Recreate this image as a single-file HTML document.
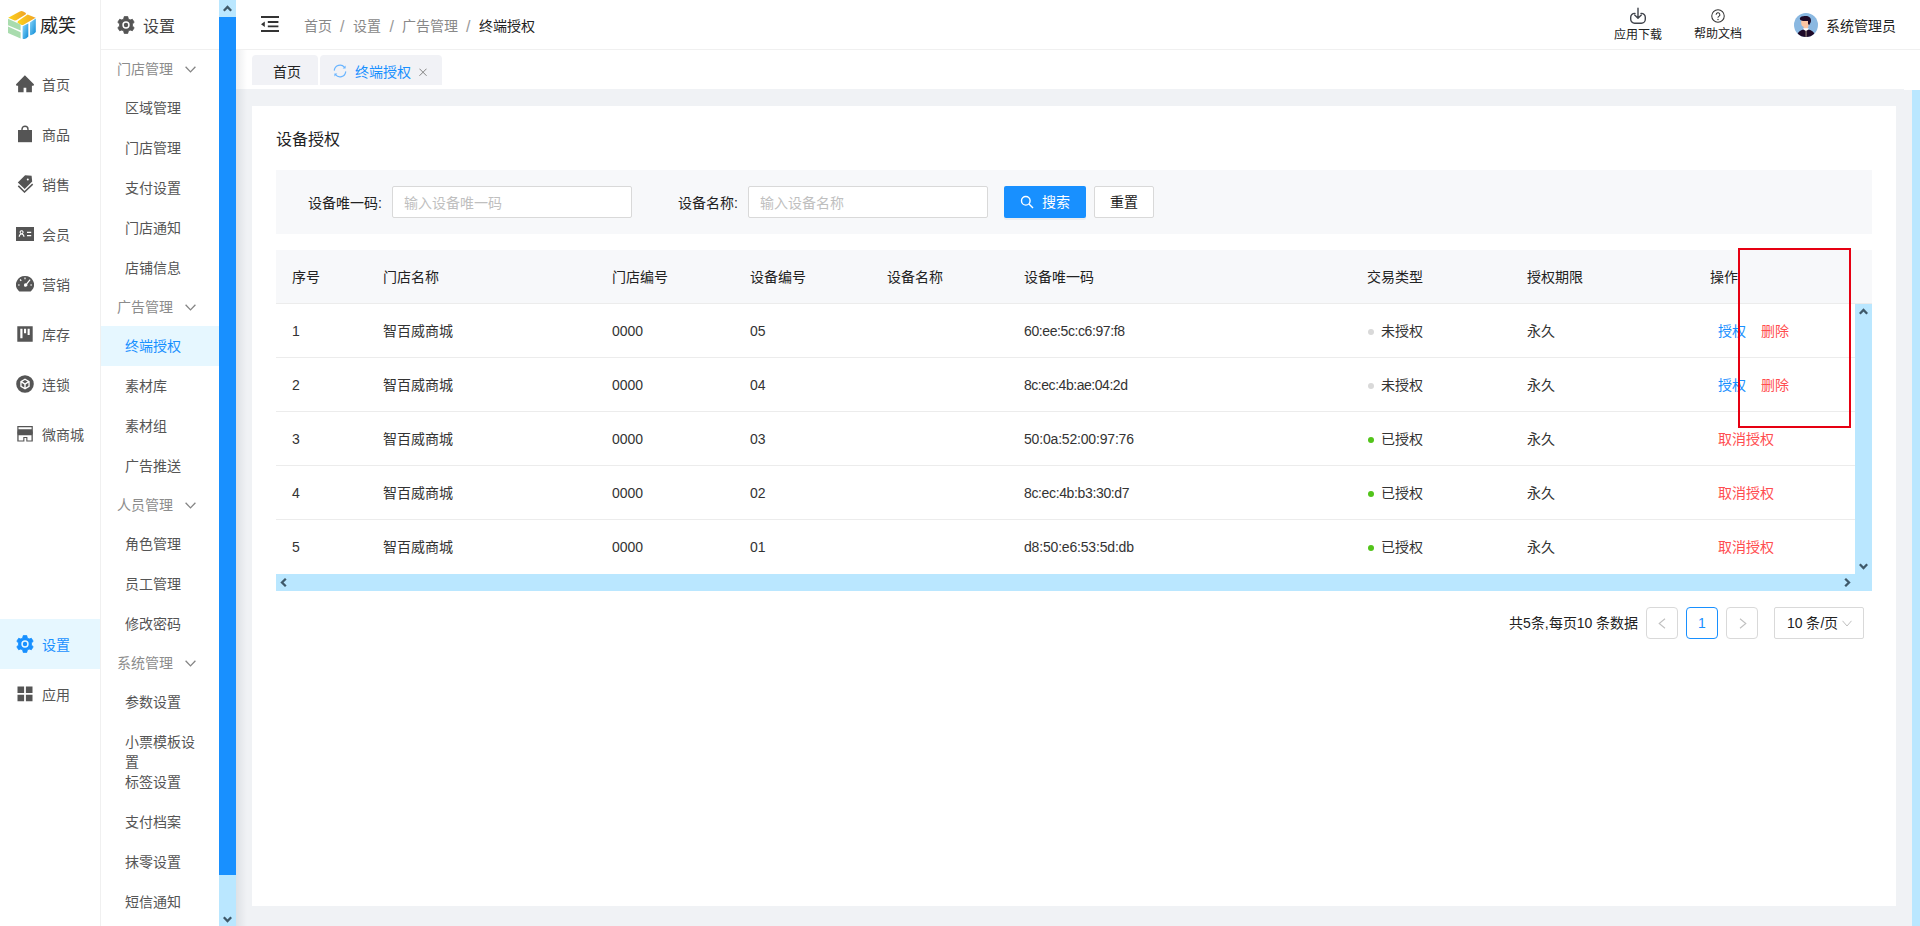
<!DOCTYPE html>
<html lang="zh-CN">
<head>
<meta charset="utf-8">
<title>终端授权</title>
<style>
*{box-sizing:border-box;margin:0;padding:0}
html,body{width:1920px;height:926px;overflow:hidden;background:#f0f2f5}
body{font-family:"Liberation Sans",sans-serif;font-size:14px;color:#333;position:relative}
.abs{position:absolute}
svg{display:block}
.t{position:absolute;white-space:nowrap;font-size:14px;line-height:20px}
#nav1{position:absolute;left:0;top:0;width:100px;height:926px;background:#fff}
#nav1 .logo{position:absolute;left:8px;top:11px;width:28px;height:28px}
.n1{position:absolute;left:0;width:100px;height:50px}
.n1 .ic{position:absolute;left:16px;top:16px;width:18px;height:18px}
.n1.on{background:#e6f7ff}
#nav2{position:absolute;left:100px;top:0;width:119px;height:926px;background:#fff;border-left:1px solid #f0f0f0}
#nav2 .hd{position:absolute;left:0;top:0;width:118px;height:50px;border-bottom:1px solid #f0f0f0}
.son{position:absolute;left:0;width:118px;height:40px;background:#e6f7ff}
#sb{position:absolute;left:219px;top:0;width:17px;height:926px;background:#bae7ff}
#sb .thumb{position:absolute;left:0;top:17px;width:17px;height:858px;background:#1890ff}
#top{position:absolute;left:236px;top:0;width:1684px;height:50px;background:#fff;border-bottom:1px solid #f0f0f0}
#tabs{position:absolute;left:236px;top:50px;width:1684px;height:39px;background:#fff}
.tab{position:absolute;top:5px;height:30px;background:#f1f2f6;border-radius:4px 4px 0 0}
#card{position:absolute;left:252px;top:106px;width:1644px;height:800px;background:#fff}
#psb{position:absolute;left:1912px;top:90px;width:8px;height:836px;background:#bae7ff}
.inp{position:absolute;top:186px;width:240px;height:32px;background:#fff;border:1px solid #d9d9d9;border-radius:2px}
.hl{position:absolute;left:276px;width:1579px;height:1px;background:#ececec}
.dot{position:absolute;width:6px;height:6px;border-radius:50%}
.pg{position:absolute;top:607px;width:32px;height:32px;border:1px solid #d9d9d9;border-radius:4px;background:#fff}
</style>
</head>
<body>
<div id="nav1">
<svg class="logo" viewBox="0 0 28 28"><defs>
<linearGradient id="ly" x1="0" y1="0" x2="1" y2="0"><stop offset="0" stop-color="#fdd41a"/><stop offset="1" stop-color="#f0a326"/></linearGradient>
<linearGradient id="lb" x1="0" y1="0" x2="1" y2="1"><stop offset="0" stop-color="#8fd8fa"/><stop offset="1" stop-color="#0a8ad6"/></linearGradient></defs>
<path fill="url(#ly)" d="M0.200 6.700 11.800.5q1.700-.8 3.400 0L17.900 1.900v1.300L8.300 9.200l-1.600.3z"/>
<path fill="url(#ly)" d="M9.800 10.300 19.600 3.600l8 3.100L15.500 13.700q-1.200.5-2.400 0L9.600 11.900z"/>
<path fill="#a9dcae" d="M0 7.800 12.600 13.600v6L0 14.200z"/>
<path fill="#a9dcae" d="M0 15.600 12.600 21.300v6.300L0 22z"/>
<path fill="url(#lb)" d="M14.600 15.200 20.300 12.400V25.500q-2.300 2.600-4.800 2.600-.9-.2-.9-1.200z"/>
<path fill="url(#lb)" d="M22 11.400 27.800 7.600V21q-2 2.800-5 3.200-.8-.1-.8-.9z"/>
</svg>
<div class="n1" style="top:59px"><svg class="ic" viewBox="0 0 18 18"><path fill="#555" d="M8.900 0.200 0.100 9.200Q-.2 10.700 1 10.800H2.100V17.200H7.600V12.700H10.300V17.200H15.900V10.800H17Q18.200 10.700 17.900 9.200z"/></svg></div>
<div class="n1" style="top:109px"><svg class="ic" viewBox="0 0 18 18"><path fill="#555" d="M2 5h14v12.200H2z"/><path fill="none" stroke="#555" stroke-width="1.400" d="M6 6V4.200a3 3 0 0 1 6 0V6"/></svg></div>
<div class="n1" style="top:159px"><svg class="ic" viewBox="0 0 18 18"><path fill="#555" fill-rule="evenodd" d="M9.100 0.200 15.600 0.800 16.200 6.500 8.700 14 1.800 7.400zM11.800 3.400a1 1 0 1 0 .01 2 1 1 0 0 0-.01-2z"/><path fill="none" stroke="#555" stroke-width="1.500" d="M2.300 10.900 8.500 17 16.700 9.100"/></svg></div>
<div class="n1" style="top:209px"><svg class="ic" viewBox="0 0 18 18"><path fill="#555" fill-rule="evenodd" d="M0 2h18v14H0zM5.600 5.200a2 2 0 0 0-1.200 3.600C3.300 9.400 2.700 10.500 2.700 11.800h1.200c0-1.200.7-2.200 1.700-2.200s1.700 1 1.700 2.200h1.200c0-1.300-.6-2.400-1.700-3a2 2 0 0 0-1.200-3.600zm0 1.100a.95.950 0 1 1 0 1.900.95.950 0 0 1 0-1.900zM11 6.800v1.300h4.200V6.800zM11 10v1.300h4.200V10z"/></svg></div>
<div class="n1" style="top:259px"><svg class="ic" viewBox="0 0 18 18"><path fill="#555" fill-rule="evenodd" d="M9 1.100a8.900 8.500 0 0 0-7 13.900c.5.900 1.100 1.500 2 1.500h10c.9 0 1.500-.6 2-1.500A8.900 8.500 0 0 0 9 1.100zM8.400 2.600h1.200v1.700H8.400zM3.600 5l.9-.9 1.200 1.200-.9.900zM13.700 4.200l.9.900-3.400 4.200a1.700 1.700 0 1 1-1-.9zM2 9.400h1.700v1.200H2zM14.300 9.400H16v1.200h-1.700z"/></svg></div>
<div class="n1" style="top:309px"><svg class="ic" viewBox="0 0 18 18"><path fill="#555" fill-rule="evenodd" d="M1.300 1.200h15.400v15.600H1.300zM4.300 3.800v9.400h2.200V3.800zM8 3.800v4.400h2.100V3.800zM11.600 3.800v6.200h2.100V3.800z"/></svg></div>
<div class="n1" style="top:359px"><svg class="ic" viewBox="0 0 18 18"><path fill="#555" fill-rule="evenodd" d="M9 0.200a8.800 8.800 0 1 0 0 17.600A8.800 8.800 0 0 0 9 .200zM9 3.600l4.700 2.700v5.400L9 14.400l-4.700-2.700V6.300zM9 5.100 6.300 6.600 9 8.200l2.700-1.600zM5.600 7.800v3.200l2.700 1.600V9.400zM12.400 7.800 9.700 9.400v3.200l2.700-1.600z"/></svg></div>
<div class="n1" style="top:409px"><svg class="ic" viewBox="0 0 18 18"><path fill="#555" fill-rule="evenodd" d="M1.300 1H16.800V4.400Q17.100 7.500 16.800 10.200V16.600H1.300V10.200Q1 7.500 1.300 4.400zM2.500 2.200V4.200H15.600V2.200zM2.600 10.200V15.400H7.300V12H11.400V15.400H15.500V10.200zM8.400 13.100V16.600H10.300V13.100z"/></svg></div>
<div class="n1 on" style="top:619px"><svg class="ic" viewBox="0 0 18 18"><path fill="#1890ff" stroke="#1890ff" stroke-width=".8" stroke-linejoin="round" fill-rule="evenodd" d="M11.33 2.93 L10.79 0.59 L7.21 0.59 L6.67 2.93 L4.91 3.95 L2.61 3.25 L0.82 6.34 L2.58 7.98 L2.58 10.02 L0.82 11.66 L2.61 14.75 L4.91 14.05 L6.67 15.07 L7.21 17.41 L10.79 17.41 L11.33 15.07 L13.09 14.05 L15.39 14.75 L17.18 11.66 L15.42 10.02 L15.42 7.98 L17.18 6.34 L15.39 3.25 L13.09 3.95Z"/><circle cx="9" cy="9" r="2.950" fill="none" stroke="#e6f7ff" stroke-width="1.500"/></svg></div>
<div class="n1" style="top:669px"><svg class="ic" viewBox="0 0 18 18"><path fill="#555" d="M1.500 1.500h6.600v6.500H1.500zM9.900 1.500h6.600v6.500H9.900zM1.500 9.800h6.600v6.500H1.500zM9.900 9.800h6.600v6.500H9.900z"/></svg></div>
</div>
<div class="t" style="left:40px;top:14px;font-size:18px;line-height:24px;color:#222;">威笑</div>
<div class="t" style="left:42px;top:75px;font-size:14px;line-height:20px;color:#555;">首页</div>
<div class="t" style="left:42px;top:125px;font-size:14px;line-height:20px;color:#555;">商品</div>
<div class="t" style="left:42px;top:175px;font-size:14px;line-height:20px;color:#555;">销售</div>
<div class="t" style="left:42px;top:225px;font-size:14px;line-height:20px;color:#555;">会员</div>
<div class="t" style="left:42px;top:275px;font-size:14px;line-height:20px;color:#555;">营销</div>
<div class="t" style="left:42px;top:325px;font-size:14px;line-height:20px;color:#555;">库存</div>
<div class="t" style="left:42px;top:375px;font-size:14px;line-height:20px;color:#555;">连锁</div>
<div class="t" style="left:42px;top:425px;font-size:14px;line-height:20px;color:#555;">微商城</div>
<div class="t" style="left:42px;top:635px;font-size:14px;line-height:20px;color:#1890ff;">设置</div>
<div class="t" style="left:42px;top:685px;font-size:14px;line-height:20px;color:#555;">应用</div>
<div id="nav2"><div class="hd"></div>
<svg class="abs" style="left:16px;top:16px" width="18" height="18" viewBox="0 0 18 18"><path fill="#555" stroke="#555" stroke-width=".8" stroke-linejoin="round" fill-rule="evenodd" d="M11.33 2.93 L10.79 0.59 L7.21 0.59 L6.67 2.93 L4.91 3.95 L2.61 3.25 L0.82 6.34 L2.58 7.98 L2.58 10.02 L0.82 11.66 L2.61 14.75 L4.91 14.05 L6.67 15.07 L7.21 17.41 L10.79 17.41 L11.33 15.07 L13.09 14.05 L15.39 14.75 L17.18 11.66 L15.42 10.02 L15.42 7.98 L17.18 6.34 L15.39 3.25 L13.09 3.95Z"/><circle cx="9" cy="9" r="2.950" fill="none" stroke="#fff" stroke-width="1.500"/></svg>
<div class="son" style="top:326px"></div>
</div>
<div class="t" style="left:143px;top:15.5px;font-size:16px;line-height:22px;color:#444;">设置</div>
<div class="t" style="left:117px;top:59px;font-size:14px;line-height:20px;color:#8c8c8c;">门店管理</div>
<svg class="abs" style="left:185px;top:66px" width="11" height="7" viewBox="0 0 11 7"><path fill="none" stroke="#858585" stroke-width="1.300" d="M.6.800 5.500 5.900 10.400.8"/></svg>
<div class="t" style="left:117px;top:297px;font-size:14px;line-height:20px;color:#8c8c8c;">广告管理</div>
<svg class="abs" style="left:185px;top:304px" width="11" height="7" viewBox="0 0 11 7"><path fill="none" stroke="#858585" stroke-width="1.300" d="M.6.800 5.500 5.900 10.400.8"/></svg>
<div class="t" style="left:117px;top:495px;font-size:14px;line-height:20px;color:#8c8c8c;">人员管理</div>
<svg class="abs" style="left:185px;top:502px" width="11" height="7" viewBox="0 0 11 7"><path fill="none" stroke="#858585" stroke-width="1.300" d="M.6.800 5.500 5.900 10.400.8"/></svg>
<div class="t" style="left:117px;top:653px;font-size:14px;line-height:20px;color:#8c8c8c;">系统管理</div>
<svg class="abs" style="left:185px;top:660px" width="11" height="7" viewBox="0 0 11 7"><path fill="none" stroke="#858585" stroke-width="1.300" d="M.6.800 5.500 5.900 10.400.8"/></svg>
<div class="t" style="left:125px;top:98px;font-size:14px;line-height:20px;color:#555;">区域管理</div>
<div class="t" style="left:125px;top:138px;font-size:14px;line-height:20px;color:#555;">门店管理</div>
<div class="t" style="left:125px;top:178px;font-size:14px;line-height:20px;color:#555;">支付设置</div>
<div class="t" style="left:125px;top:218px;font-size:14px;line-height:20px;color:#555;">门店通知</div>
<div class="t" style="left:125px;top:258px;font-size:14px;line-height:20px;color:#555;">店铺信息</div>
<div class="t" style="left:125px;top:336px;font-size:14px;line-height:20px;color:#1890ff;">终端授权</div>
<div class="t" style="left:125px;top:376px;font-size:14px;line-height:20px;color:#555;">素材库</div>
<div class="t" style="left:125px;top:416px;font-size:14px;line-height:20px;color:#555;">素材组</div>
<div class="t" style="left:125px;top:456px;font-size:14px;line-height:20px;color:#555;">广告推送</div>
<div class="t" style="left:125px;top:534px;font-size:14px;line-height:20px;color:#555;">角色管理</div>
<div class="t" style="left:125px;top:574px;font-size:14px;line-height:20px;color:#555;">员工管理</div>
<div class="t" style="left:125px;top:614px;font-size:14px;line-height:20px;color:#555;">修改密码</div>
<div class="t" style="left:125px;top:692px;font-size:14px;line-height:20px;color:#555;">参数设置</div>
<div class="t" style="left:125px;top:732px;font-size:14px;line-height:20px;color:#555;">小票模板设</div>
<div class="t" style="left:125px;top:752px;font-size:14px;line-height:20px;color:#555;">置</div>
<div class="t" style="left:125px;top:772px;font-size:14px;line-height:20px;color:#555;">标签设置</div>
<div class="t" style="left:125px;top:812px;font-size:14px;line-height:20px;color:#555;">支付档案</div>
<div class="t" style="left:125px;top:852px;font-size:14px;line-height:20px;color:#555;">抹零设置</div>
<div class="t" style="left:125px;top:892px;font-size:14px;line-height:20px;color:#555;">短信通知</div>
<div id="sb"><div class="thumb"></div>
<svg class="abs" style="left:4px;top:5px" width="9" height="7" viewBox="0 0 9 7"><path fill="none" stroke="#3f596a" stroke-width="2.300" d="M.8 5.800 4.500 2 8.200 5.800"/></svg>
<svg class="abs" style="left:4px;top:915.5px" width="9" height="7" viewBox="0 0 9 7"><path fill="none" stroke="#3f596a" stroke-width="2.300" d="M.8 1.200 4.500 5 8.200 1.200"/></svg>
</div>
<div id="top">
<svg class="abs" style="left:25px;top:16px" width="18" height="16" viewBox="0 0 18 16"><path fill="#333" d="M0 0h18v2H0zM6.800 5h10.600v1.900H6.800zM6.800 9.400h10.600v1.900H6.800zM0 14h18v2H0zM3.800 5.400v5.500L0 8.150z"/></svg>
<svg class="abs" style="left:1393px;top:7px" width="18" height="18" viewBox="0 0 18 18"><g fill="none" stroke="#40444c" stroke-width="1.400" stroke-linecap="round" stroke-linejoin="round"><path d="M9 1.200v9.800M5.700 8 9 11.300 12.300 8"/><path d="M6 6.400H5.600A3.900 3.900 0 0 0 1.700 10.300v2A3.900 3.900 0 0 0 5.600 16.200h6.800a3.900 3.900 0 0 0 3.900-3.900v-2A3.900 3.900 0 0 0 12.400 6.400H12"/></g></svg>
<svg class="abs" style="left:1475px;top:9px" width="14" height="14" viewBox="0 0 15 15"><circle cx="7.500" cy="7.500" r="6.700" fill="none" stroke="#333" stroke-width="1.100"/><path fill="none" stroke="#333" stroke-width="1.100" d="M5.500 6.100a2 2 0 1 1 2.900 1.800c-.6.300-.9.700-.9 1.300v.3"/><circle cx="7.500" cy="11.200" r=".75" fill="#333"/></svg>
<svg class="abs" style="left:1558px;top:13px" width="24" height="24" viewBox="0 0 24 24"><defs><clipPath id="av"><circle cx="12" cy="12" r="12"/></clipPath></defs><g clip-path="url(#av)"><rect width="24" height="24" fill="#8ab8e1"/><path fill="#1e0a28" d="M3 24C3 19.500 6 17.100 10 16.600h4c4 .5 7 2.900 7 7.400z"/><path fill="#fbc5a2" d="M7.200 7.500 13.600 6.800l1.300 3.200-.6 3.600-.8 2.200H9.800l-.2-2c-1.600-.3-2.400-1.800-2.400-3.800z"/><path fill="#fff" d="M9.300 15.300h5.300v.9L12 18.300 9.300 16.200z"/><path fill="#1e0a28" d="M5.800 5.400C6.500 3.500 9 2.800 11.500 3c3-.2 5.500 1.500 5.500 4.500 0 2-.8 3-1.500 3.700l.1.900-1.200-.5C13.800 10.500 14 9 14 8c-2 .3-5.500 0-7-.8-.7-.4-1.300-1-1.200-1.800z"/><rect x="11.400" y="17.700" width="1.400" height="6.300" fill="#7d6b68"/></g></svg>
</div>
<div class="t" style="left:304px;top:16px;font-size:14px;line-height:20px;color:#888;">首页</div>
<div class="t" style="left:340px;top:15.5px;font-size:16px;line-height:22px;color:#999;">/</div>
<div class="t" style="left:353px;top:16px;font-size:14px;line-height:20px;color:#888;">设置</div>
<div class="t" style="left:389.5px;top:15.5px;font-size:16px;line-height:22px;color:#999;">/</div>
<div class="t" style="left:402px;top:16px;font-size:14px;line-height:20px;color:#888;">广告管理</div>
<div class="t" style="left:466px;top:15.5px;font-size:16px;line-height:22px;color:#999;">/</div>
<div class="t" style="left:479px;top:16px;font-size:14px;line-height:20px;color:#222;">终端授权</div>
<div class="t" style="left:1614px;top:25.5px;font-size:12px;line-height:18px;color:#222;">应用下载</div>
<div class="t" style="left:1694px;top:24.5px;font-size:12px;line-height:18px;color:#222;">帮助文档</div>
<div class="t" style="left:1826px;top:16px;font-size:14px;line-height:20px;color:#222;">系统管理员</div>
<div id="tabs">
<div class="tab" style="left:16px;width:66px"></div>
<div class="tab" style="left:84px;width:122px">
<svg class="abs" style="left:13px;top:9px" width="14" height="14" viewBox="0 0 14 14"><g fill="none" stroke="#6ab5ff" stroke-width="1.200" stroke-linecap="round"><path d="M1.300 6.200A5.800 5.800 0 0 1 11.500 3.300M12.700 7.800A5.800 5.800 0 0 1 2.500 10.700"/></g><path fill="#6ab5ff" d="M12.600 1.600v3H9.700zM1.400 12.400v-3h2.900z"/></svg>
<svg class="abs" style="left:99px;top:13px" width="8" height="8.500" viewBox="0 0 9 9"><path fill="none" stroke="#808080" stroke-width="1.100" d="M.5.500l8 8M8.500.5l-8 8"/></svg>
</div></div>
<div class="t" style="left:273px;top:62px;font-size:14px;line-height:20px;color:#222;">首页</div>
<div class="t" style="left:355px;top:62px;font-size:14px;line-height:20px;color:#1890ff;">终端授权</div>
<div id="card"></div>
<div id="psb"></div>
<div class="abs" style="left:1904px;top:89px;width:16px;height:1px;background:#fff"></div>
<div class="abs" style="left:236px;top:50px;width:11px;height:876px;background:linear-gradient(90deg,rgba(0,21,41,.075),rgba(0,21,41,0))"></div>
<div class="t" style="left:276px;top:129px;font-size:16px;line-height:22px;color:#222;">设备授权</div>
<div class="abs" style="left:276px;top:170px;width:1596px;height:64px;background:#f7f8fa"></div>
<div class="t" style="left:308px;top:193px;font-size:14px;line-height:20px;color:#222;font-weight:500">设备唯一码:</div>
<div class="inp" style="left:392px"></div>
<div class="t" style="left:404px;top:193px;font-size:14px;line-height:20px;color:#bfbfbf;">输入设备唯一码</div>
<div class="t" style="left:678px;top:193px;font-size:14px;line-height:20px;color:#222;font-weight:500">设备名称:</div>
<div class="inp" style="left:748px"></div>
<div class="t" style="left:760px;top:193px;font-size:14px;line-height:20px;color:#bfbfbf;">输入设备名称</div>
<div class="abs" style="left:1004px;top:186px;width:82px;height:32px;background:#1890ff;border-radius:2px;box-shadow:0 2px 0 rgba(0,0,0,.045)"><svg class="abs" style="left:16px;top:9px" width="14" height="14" viewBox="0 0 14 14"><circle cx="5.800" cy="5.800" r="4.300" fill="none" stroke="#fff" stroke-width="1.400"/><path stroke="#fff" stroke-width="1.500" d="M9 9l4 4"/></svg></div>
<div class="t" style="left:1042px;top:192px;font-size:14px;line-height:20px;color:#fff;">搜索</div>
<div class="abs" style="left:1094px;top:186px;width:60px;height:32px;background:#fff;border:1px solid #d9d9d9;border-radius:2px"></div>
<div class="t" style="left:1110px;top:192px;font-size:14px;line-height:20px;color:#222;">重置</div>
<div class="abs" style="left:276px;top:250px;width:1596px;height:54px;background:#f7f8fa;border-bottom:1px solid #ececec"></div>
<div class="t" style="left:292px;top:267px;font-size:14px;line-height:20px;color:#222;">序号</div>
<div class="t" style="left:383px;top:267px;font-size:14px;line-height:20px;color:#222;">门店名称</div>
<div class="t" style="left:612px;top:267px;font-size:14px;line-height:20px;color:#222;">门店编号</div>
<div class="t" style="left:750px;top:267px;font-size:14px;line-height:20px;color:#222;">设备编号</div>
<div class="t" style="left:887px;top:267px;font-size:14px;line-height:20px;color:#222;">设备名称</div>
<div class="t" style="left:1024px;top:267px;font-size:14px;line-height:20px;color:#222;">设备唯一码</div>
<div class="t" style="left:1367px;top:267px;font-size:14px;line-height:20px;color:#222;">交易类型</div>
<div class="t" style="left:1527px;top:267px;font-size:14px;line-height:20px;color:#222;">授权期限</div>
<div class="t" style="left:1710px;top:267px;font-size:14px;line-height:20px;color:#222;">操作</div>
<div class="t" style="left:292px;top:321px;font-size:14px;line-height:20px;color:#333;">1</div>
<div class="t" style="left:383px;top:321px;font-size:14px;line-height:20px;color:#333;">智百威商城</div>
<div class="t" style="left:612px;top:321px;font-size:14px;line-height:20px;color:#333;">0000</div>
<div class="t" style="left:750px;top:321px;font-size:14px;line-height:20px;color:#333;">05</div>
<div class="t" style="left:1024px;top:321px;font-size:14px;line-height:20px;color:#333;letter-spacing:-0.4px">60:ee:5c:c6:97:f8</div>
<div class="dot" style="left:1368px;top:329px;background:#d9d9d9"></div>
<div class="t" style="left:1381px;top:321px;font-size:14px;line-height:20px;color:#333;">未授权</div>
<div class="t" style="left:1527px;top:321px;font-size:14px;line-height:20px;color:#333;">永久</div>
<div class="t" style="left:1718px;top:321px;font-size:14px;line-height:20px;color:#1890ff;">授权</div>
<div class="t" style="left:1761px;top:321px;font-size:14px;line-height:20px;color:#ff4d4f;">删除</div>
<div class="hl" style="top:357px"></div>
<div class="t" style="left:292px;top:375px;font-size:14px;line-height:20px;color:#333;">2</div>
<div class="t" style="left:383px;top:375px;font-size:14px;line-height:20px;color:#333;">智百威商城</div>
<div class="t" style="left:612px;top:375px;font-size:14px;line-height:20px;color:#333;">0000</div>
<div class="t" style="left:750px;top:375px;font-size:14px;line-height:20px;color:#333;">04</div>
<div class="t" style="left:1024px;top:375px;font-size:14px;line-height:20px;color:#333;letter-spacing:-0.46px">8c:ec:4b:ae:04:2d</div>
<div class="dot" style="left:1368px;top:383px;background:#d9d9d9"></div>
<div class="t" style="left:1381px;top:375px;font-size:14px;line-height:20px;color:#333;">未授权</div>
<div class="t" style="left:1527px;top:375px;font-size:14px;line-height:20px;color:#333;">永久</div>
<div class="t" style="left:1718px;top:375px;font-size:14px;line-height:20px;color:#1890ff;">授权</div>
<div class="t" style="left:1761px;top:375px;font-size:14px;line-height:20px;color:#ff4d4f;">删除</div>
<div class="hl" style="top:411px"></div>
<div class="t" style="left:292px;top:429px;font-size:14px;line-height:20px;color:#333;">3</div>
<div class="t" style="left:383px;top:429px;font-size:14px;line-height:20px;color:#333;">智百威商城</div>
<div class="t" style="left:612px;top:429px;font-size:14px;line-height:20px;color:#333;">0000</div>
<div class="t" style="left:750px;top:429px;font-size:14px;line-height:20px;color:#333;">03</div>
<div class="t" style="left:1024px;top:429px;font-size:14px;line-height:20px;color:#333;letter-spacing:-0.18px">50:0a:52:00:97:76</div>
<div class="dot" style="left:1368px;top:437px;background:#52c41a"></div>
<div class="t" style="left:1381px;top:429px;font-size:14px;line-height:20px;color:#333;">已授权</div>
<div class="t" style="left:1527px;top:429px;font-size:14px;line-height:20px;color:#333;">永久</div>
<div class="t" style="left:1718px;top:429px;font-size:14px;line-height:20px;color:#ff4d4f;">取消授权</div>
<div class="hl" style="top:465px"></div>
<div class="t" style="left:292px;top:483px;font-size:14px;line-height:20px;color:#333;">4</div>
<div class="t" style="left:383px;top:483px;font-size:14px;line-height:20px;color:#333;">智百威商城</div>
<div class="t" style="left:612px;top:483px;font-size:14px;line-height:20px;color:#333;">0000</div>
<div class="t" style="left:750px;top:483px;font-size:14px;line-height:20px;color:#333;">02</div>
<div class="t" style="left:1024px;top:483px;font-size:14px;line-height:20px;color:#333;letter-spacing:-0.36px">8c:ec:4b:b3:30:d7</div>
<div class="dot" style="left:1368px;top:491px;background:#52c41a"></div>
<div class="t" style="left:1381px;top:483px;font-size:14px;line-height:20px;color:#333;">已授权</div>
<div class="t" style="left:1527px;top:483px;font-size:14px;line-height:20px;color:#333;">永久</div>
<div class="t" style="left:1718px;top:483px;font-size:14px;line-height:20px;color:#ff4d4f;">取消授权</div>
<div class="hl" style="top:519px"></div>
<div class="t" style="left:292px;top:537px;font-size:14px;line-height:20px;color:#333;">5</div>
<div class="t" style="left:383px;top:537px;font-size:14px;line-height:20px;color:#333;">智百威商城</div>
<div class="t" style="left:612px;top:537px;font-size:14px;line-height:20px;color:#333;">0000</div>
<div class="t" style="left:750px;top:537px;font-size:14px;line-height:20px;color:#333;">01</div>
<div class="t" style="left:1024px;top:537px;font-size:14px;line-height:20px;color:#333;letter-spacing:-0.18px">d8:50:e6:53:5d:db</div>
<div class="dot" style="left:1368px;top:545px;background:#52c41a"></div>
<div class="t" style="left:1381px;top:537px;font-size:14px;line-height:20px;color:#333;">已授权</div>
<div class="t" style="left:1527px;top:537px;font-size:14px;line-height:20px;color:#333;">永久</div>
<div class="t" style="left:1718px;top:537px;font-size:14px;line-height:20px;color:#ff4d4f;">取消授权</div>
<div class="abs" style="left:1855px;top:304px;width:17px;height:270px;background:#bae7ff"></div>
<div class="abs" style="left:276px;top:574px;width:1596px;height:17px;background:#bae7ff"></div>
<svg class="abs" style="left:1859px;top:308px" width="9" height="7" viewBox="0 0 9 7"><path fill="none" stroke="#3f596a" stroke-width="2.300" d="M.8 5.800 4.500 2 8.200 5.800"/></svg>
<svg class="abs" style="left:1859px;top:563px" width="9" height="7" viewBox="0 0 9 7"><path fill="none" stroke="#3f596a" stroke-width="2.300" d="M.8 1.200 4.500 5 8.200 1.200"/></svg>
<svg class="abs" style="left:280px;top:578px" width="7" height="9" viewBox="0 0 7 9"><path fill="none" stroke="#3f596a" stroke-width="2.300" d="M5.800.8 2 4.500 5.800 8.200"/></svg>
<svg class="abs" style="left:1844px;top:578px" width="7" height="9" viewBox="0 0 7 9"><path fill="none" stroke="#3f596a" stroke-width="2.300" d="M1.200.8 5 4.500 1.200 8.200"/></svg>
<div class="abs" style="left:1738px;top:248px;width:113px;height:180px;border:2px solid #e60012"></div>
<div class="t" style="left:1509px;top:613px;font-size:14px;line-height:20px;color:#222;">共5条,每页10 条数据</div>
<div class="pg" style="left:1646px"><svg class="abs" style="left:11px;top:10px" width="8" height="11" viewBox="0 0 8 11"><path fill="none" stroke="#c0c0c0" stroke-width="1.100" d="M7 .8 1.200 5.500 7 10.200"/></svg></div>
<div class="pg" style="left:1686px;border-color:#1890ff"></div>
<div class="t" style="left:1698px;top:613px;font-size:14px;line-height:20px;color:#1890ff;">1</div>
<div class="pg" style="left:1726px"><svg class="abs" style="left:12px;top:10px" width="8" height="11" viewBox="0 0 8 11"><path fill="none" stroke="#c0c0c0" stroke-width="1.100" d="M1 .8 6.800 5.500 1 10.200"/></svg></div>
<div class="abs" style="left:1774px;top:607px;width:90px;height:32px;border:1px solid #d9d9d9;border-radius:2px;background:#fff"><svg class="abs" style="left:67px;top:12px" width="10" height="7" viewBox="0 0 10 7"><path fill="none" stroke="#bfbfbf" stroke-width="1" d="M.5.800 5 6 9.500.8"/></svg></div>
<div class="t" style="left:1787px;top:613px;font-size:14px;line-height:20px;color:#222;">10 条/页</div>
</body>
</html>
